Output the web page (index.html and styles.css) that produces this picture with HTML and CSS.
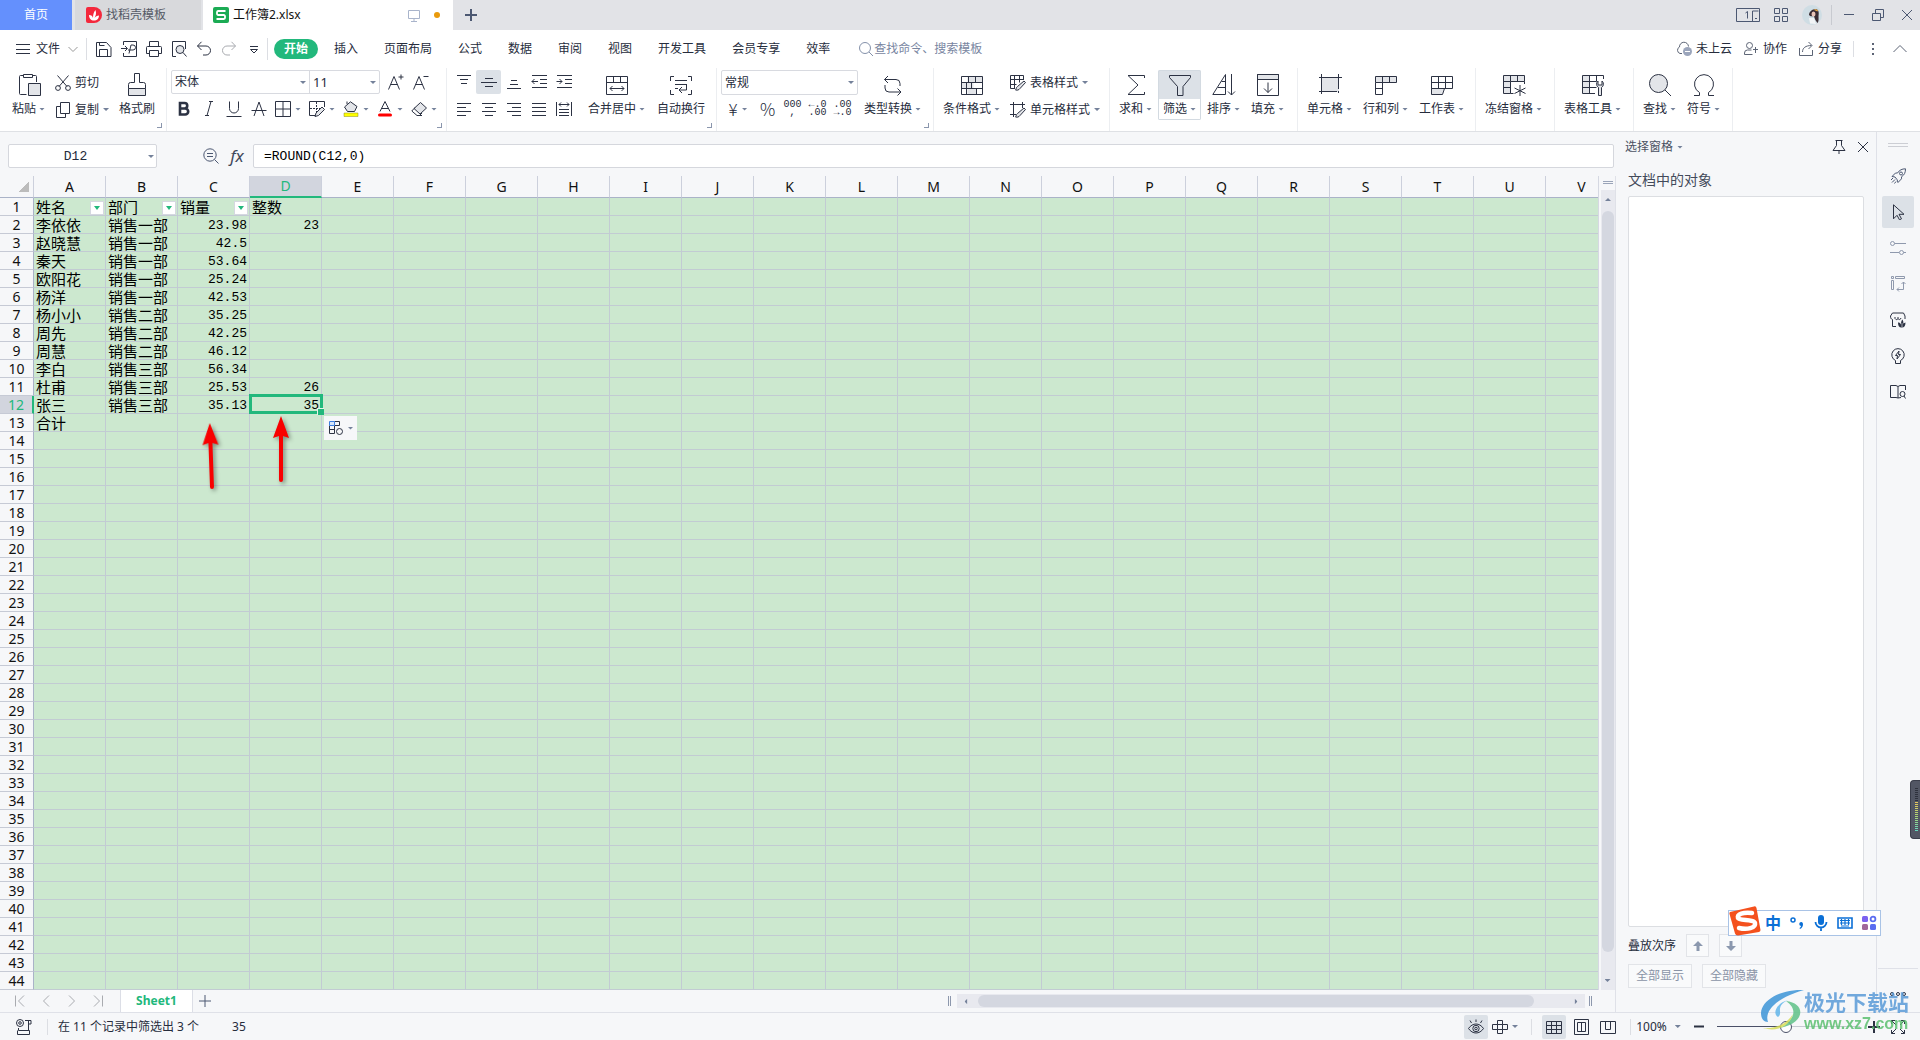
FILE: index.html
```html
<!DOCTYPE html>
<html lang="zh-CN">
<head>
<meta charset="utf-8">
<title>工作簿2.xlsx</title>
<link rel="stylesheet" href="styles.css">
</head>
<body>
<svg class="sprite" aria-hidden="true">
  <symbol id="paste" viewBox="0 0 24 24"><path d="M9.500 21.500H3.500a1 1 0 0 1-1-1V3.500a1 1 0 0 1 1-1H6.500M15.500 2.500h3a1 1 0 0 1 1 1V9"/><path d="M6.500 1.500h9v3h-9z"/><path class="f" d="M11.500 10.500h12v12h-12z"/></symbol>
  <symbol id="cut" viewBox="0 0 16 16"><path d="M2.500.5L12 11.500M13.500.5L4 11.500"/><circle cx="3" cy="13" r="2.400"/><circle cx="13" cy="13" r="2.400"/></symbol>
  <symbol id="copy" viewBox="0 0 16 16"><path d="M5.500.5h9v11h-9zM5.500 4.500h-4v11h9v-4"/></symbol>
  <symbol id="brush" viewBox="0 0 24 24"><path class="f" d="M3.500 15.500h17v7h-17z"/><path d="M3.500 15.500v-4a2 2 0 0 1 2-2h4v-9h5v9h4a2 2 0 0 1 2 2v4"/></symbol>
  <symbol id="border" viewBox="0 0 16 16"><path d="M.5.5h15v15h-15zM8 .5v15M.5 8h15"/></symbol>
  <symbol id="drawborder" viewBox="0 0 16 16"><path d="M15.500 6V.5h-15v14H7"/><path stroke-dasharray="2 1" d="M1 7.500h11M7.500 1v11"/><path class="f" d="M13 6l2.500 2.500-6 6-3.500 1 1-3.500z"/></symbol>
  <symbol id="fill" viewBox="0 0 16 16"><path class="f" d="M7.500.8L14 5.500l-2.500 5h-7L1.500 6z"/><path d="M4 3V.5"/><path fill="#ff0" stroke="#8a8a2a" stroke-width=".5" d="M1 12h14v3.500H1z"/></symbol>
  <symbol id="fontcolor" viewBox="0 0 16 16"><path d="M3 10.500L8 .5l5 10M4.500 7.500h7"/><path stroke="#f00" stroke-width="3" stroke-linecap="round" d="M2.500 14h11"/></symbol>
  <symbol id="eraser" viewBox="0 0 16 16"><path class="f" d="M9.500 1.500l6 5.500-6.500 6-6-5.500z"/><path d="M4 6.500L.8 10 6 14.500h2.500L11 12M6 14.500h5"/></symbol>
  <symbol id="aplus" viewBox="0 0 16 16"><path d="M.5 15.500l5.500-13 5.500 13M2.500 10.500h7M13 .5v5M10.500 3h5"/></symbol>
  <symbol id="aminus" viewBox="0 0 16 16"><path d="M.5 15.500l5.500-13 5.500 13M2.500 10.500h7M10.500 2.500h5"/></symbol>
  <symbol id="strike" viewBox="0 0 16 16"><path d="M3 15L8 1l5 14M.5 9.500h15"/></symbol>
  <symbol id="underl" viewBox="0 0 16 16"><path d="M3.500.5v7a4.500 4.500 0 0 0 9 0v-7M.5 15.500h15"/></symbol>
  <symbol id="ital" viewBox="0 0 16 16"><path d="M8 .5h4M4 14.500h4M10 .5l-4 14"/></symbol>
  <symbol id="boldi" viewBox="0 0 16 16"><path stroke-width="2.600" d="M4 2h4.500a2.700 2.700 0 0 1 0 5.500H4zM4 7.500h5.200a3 3 0 0 1 0 6H4z"/></symbol>
  <symbol id="vtop" viewBox="0 0 16 16"><path d="M1 1.500h14M4 5.500h8M5 9.500h6"/></symbol>
  <symbol id="vmid" viewBox="0 0 16 16"><path d="M4 4.500h8M0 8.500h16M4 12.500h8"/></symbol>
  <symbol id="vbot" viewBox="0 0 16 16"><path d="M5 6.500h6M4 10.500h8M1 14.500h14"/></symbol>
  <symbol id="outd" viewBox="0 0 16 16"><path d="M1 1.500h15M9 5.500h7M9 9.500h7M1 13.500h15M.8 7.500H7M3.500 5L1 7.500 3.500 10"/></symbol>
  <symbol id="ind" viewBox="0 0 16 16"><path d="M1 1.500h15M9 5.500h7M9 9.500h7M1 13.500h15M.5 7.500H6M3.500 5L6 7.500 3.500 10"/></symbol>
  <symbol id="al" viewBox="0 0 16 16"><path d="M1 2.500h14M1 6.500h9M1 10.500h14M1 14.500h9"/></symbol>
  <symbol id="ac" viewBox="0 0 16 16"><path d="M1 2.500h14M4 6.500h8M1 10.500h14M4 14.500h8"/></symbol>
  <symbol id="ar" viewBox="0 0 16 16"><path d="M1 2.500h14M6 6.500h9M1 10.500h14M6 14.500h9"/></symbol>
  <symbol id="aj" viewBox="0 0 16 16"><path d="M1 2.500h14M1 6.500h14M1 10.500h14M1 14.500h14"/></symbol>
  <symbol id="ad" viewBox="0 0 16 16"><path d="M.5 1v14M15.500 1v14M3 8.500h10M3 11.500h10M3 14.500h10M3 3.500h10M5 1.500l-2 2 2 2M11 1.500l2 2-2 2"/></symbol>
  <symbol id="merge" viewBox="0 0 24 24"><path d="M1.500 3.500h21v18h-21zM1.500 9.500h21M8.500 3.500v6M15.500 3.500v6M5 15.500h14M7.500 13L5 15.500 7.500 18M16.500 13l2.500 2.500-2.500 2.500"/></symbol>
  <symbol id="wrap" viewBox="0 0 24 24"><path d="M5 3.500H1.500V8M19 3.500h3.500V8M5 21.500H1.500V17M19 21.500h3.500V17M6 7.500h12M6 11.500h12M6 15.500h3M17.500 11.500v5.500h-7M13 14l-3 3 3 3"/></symbol>
  <symbol id="convert" viewBox="0 0 24 24"><path d="M7 3L3.500 6.500 7 10M3.500 6.500H15a4 4 0 0 1 4 4V13M4 12v3a4 4 0 0 0 4 4h12M16.500 15.500L20 19l-3.500 3.500"/></symbol>
  <symbol id="cond" viewBox="0 0 24 24"><path class="f" d="M7.500 3.500h15v6h-9v6h3v6h-9v-6h-6v-6h6z" stroke="none"/><path d="M1.500 3.500h21v18h-21zM1.500 9.500h21M1.500 15.500h21M8.500 3.500v6M15.500 3.500v6M6.500 9.500v12M11.500 9.500v6M16.500 15.500v6"/></symbol>
  <symbol id="tstyle" viewBox="0 0 16 16"><path d="M13.500 5V.5H.5v13H5M.5 4.500h13M.5 9.500h6M4.500.5v13M9.500.5v7"/><path class="f" d="M14 6l1.500 1.500-5.500 6c-1 1.500-3 2-4.500 1.500 1-1 .5-2.500 2-3.500z"/></symbol>
  <symbol id="cstyle" viewBox="0 0 16 16"><path d="M3.500 0v15M0 2.500h15M0 12.500h6M12.500 0v6"/><path class="f" d="M14 6l1.500 1.500-5.500 6c-1 1.500-3 2-4.500 1.500 1-1 .5-2.500 2-3.500z"/></symbol>
  <symbol id="sum" viewBox="0 0 24 24"><path d="M20.500 5V2.500H4L14 12 4 21.500h16.500V19"/></symbol>
  <symbol id="funnel" viewBox="0 0 24 24"><path d="M1.500 2.500h21v2L15 13.500v9H9.500v-9L1.500 4.500z"/></symbol>
  <symbol id="sort" viewBox="0 0 24 24"><path d="M.8 21.500L13.500 1.500v20zM6 14.500h7.500M9.500 8.500h4M19.500 1v21M16 18.500l3.500 3.500 3.500-3.500"/></symbol>
  <symbol id="fillin" viewBox="0 0 24 24"><path class="f" d="M1.500 1.500h21v5h-21z"/><path d="M1.500 1.500h21v21h-21zM12 9.500v10M8 15.500l4 4 4-4"/></symbol>
  <symbol id="cell" viewBox="0 0 24 24"><path class="f" stroke="none" d="M4 4h17v15H4z"/><path d="M3.500 1v20M20.500 1v15M1 4.500h23M1 18.500h18M20.500 18v2"/></symbol>
  <symbol id="rowcol" viewBox="0 0 24 24"><path class="f" d="M1.500 3.500h21v6h-21z"/><path d="M1.500 9.500v12h7v-18M15.500 3.500v6M1.500 15.500h7"/></symbol>
  <symbol id="sheet" viewBox="0 0 24 24"><path class="f" d="M1.500 15.500h13l-2 6h-11z"/><path d="M1.500 3.500h21v12h-21zM1.500 9.500h21M8.500 3.500v12M15.500 3.500v12"/></symbol>
  <symbol id="freeze" viewBox="0 0 24 24"><path class="f" d="M1.500 2.500h21v6h-14v12h-7z"/><path d="M22.500 8.500V11M1.500 8.500h7M1.500 14.500h7M8.500 2.500v6M15.500 2.500v6M8.500 20.500h3M18 12v11M12.500 15l11 5.500M23.500 15l-11 5.500"/></symbol>
  <symbol id="tools" viewBox="0 0 24 24"><path class="f" stroke="none" d="M2 3h6v17H2z"/><path d="M22.500 6V2.500h-21v18H14M1.500 8.500h14M1.500 14.500h14M8.500 2.500v18M15.500 2.500v6"/><path class="f" d="M17.500 22.500v-8a4 4 0 0 1-.5-6.500v4h4V8a4 4 0 0 1-.5 6.500v8z"/></symbol>
  <symbol id="find" viewBox="0 0 24 24"><circle class="f" cx="10.500" cy="10.500" r="9"/><path d="M17 17l6 6"/></symbol>
  <symbol id="omega" viewBox="0 0 24 24"><path d="M2 22.500h5.500v-3a9.500 9.500 0 1 1 9 0v3H22"/></symbol>
  <symbol id="save" viewBox="0 0 16 16"><path d="M.5 1.500h10l4.500 5v9H.5zM3.500 15v-6.500h8V15M3.500 1.500v3h5"/></symbol>
  <symbol id="pdf" viewBox="0 0 16 16"><path d="M2.500 4V.5h13v15h-13V12M0 7.500h6M4 5l2.500 2.500L4 10M8 12.500l2-8.500h2a2 2 0 0 1 0 5H7"/></symbol>
  <symbol id="print" viewBox="0 0 16 16"><path d="M3.500 5V.5h9V5M3.500 12.500h-3v-6a1 1 0 0 1 1-1h13a1 1 0 0 1 1 1v6h-3M3.500 9.500h9v6h-9z"/></symbol>
  <symbol id="preview" viewBox="0 0 16 16"><path d="M5 15.500H1.500V.5h13V8"/><circle class="f" cx="9" cy="8.500" r="4"/><path d="M12 11.500l3.500 4"/></symbol>
  <symbol id="undo" viewBox="0 0 16 16"><path d="M5.500.8L1.500 5l4 4M1.500 5H10a4.500 4.500 0 0 1 0 9H7"/></symbol>
  <symbol id="redo" viewBox="0 0 16 16"><path d="M10.500.8l4 4.200-4 4M14.500 5H6a4.500 4.500 0 0 0 0 9h3"/></symbol>
  <symbol id="more" viewBox="0 0 16 16"><path d="M4 5.500h8M4.500 8.500L8 12l3.500-3.500z"/></symbol>
  <symbol id="burger" viewBox="0 0 16 16"><path d="M1 3.500h14M1 8.500h14M1 12.500h14"/></symbol>
  <symbol id="down" viewBox="0 0 16 16"><path d="M3.500 6L8 10.500 12.500 6"/></symbol>
  <symbol id="up" viewBox="0 0 16 16"><path d="M1.500 11L8 4.500l6.500 6.500"/></symbol>
  <symbol id="search" viewBox="0 0 16 16"><circle cx="7" cy="7" r="5.500"/><path d="M11 11l4 4"/></symbol>
  <symbol id="zoomout" viewBox="0 0 16 16"><circle cx="7" cy="7" r="6.200"/><path d="M11.500 11.500l4 4M4 5.500h6M4 8.500h6"/></symbol>
  <symbol id="cloud" viewBox="0 0 16 16"><path d="M6 12.500H4A3.500 3.500 0 0 1 3.500 6a4.500 4.500 0 0 1 9-.5"/><circle cx="11.500" cy="10.500" r="4.500" fill="#9ba5bb" stroke="none"/><path stroke="#fff" d="M9 10.500h5"/></symbol>
  <symbol id="collab" viewBox="0 0 16 16"><circle cx="6.500" cy="4.500" r="3"/><path d="M9.500 13.500h-8V12a3 3 0 0 1 3-3h4M12.500 6v6M10 8.500h5"/></symbol>
  <symbol id="share" viewBox="0 0 16 16"><path d="M1.500 7v7.500h13V9M4.500 11c0-4 3-6.500 9-6.500M10.500 1l3.500 3.500-3.500 3.500"/></symbol>
  <symbol id="dots" viewBox="0 0 16 16"><path stroke-width="2" d="M7 3h2M7 8h2M7 13h2"/></symbol>
  <symbol id="plus" viewBox="0 0 16 16"><path d="M8 2v12M2 8h12"/></symbol>
  <symbol id="monitor" viewBox="0 0 16 16"><path d="M2.500 3.500h11v8h-11zM8 11.500v3M5 14.500h6"/></symbol>
  <symbol id="min" viewBox="0 0 16 16"><path d="M3 7.500h10"/></symbol>
  <symbol id="restore" viewBox="0 0 16 16"><path d="M2.500 6.500h8v7h-8zM5.500 6.500v-4h8v8h-3"/></symbol>
  <symbol id="close" viewBox="0 0 16 16"><path d="M3 3l10 10M13 3L3 13"/></symbol>
  <symbol id="apps" viewBox="0 0 16 16"><path d="M1.500 1.500h5v5h-5zM9.500 1.500h5v5h-5zM1.500 9.500h5v5h-5zM9.500 9.500h5v5h-5z"/></symbol>
  <symbol id="pin" viewBox="0 0 16 16"><path d="M4.500 1.500h7M5.500 1.500v5L2 11.500h12L10.500 6.500v-5M8 11.500V15"/></symbol>
  <symbol id="rocket" viewBox="0 0 16 16"><path d="M5 9l-3-.5L5.500 5h2C9.500 2 12 .8 15.500.8c0 3.700-1 6-4 8v2L8 14.500 7 11.500zM1 12l2-2M2 14.500l3-3M4.500 15.500l1.500-2"/><circle cx="11" cy="5.500" r="1.500"/></symbol>
  <symbol id="cursor" viewBox="0 0 16 16"><path d="M3.500.8v14l3.500-3.500 2.500 4.500 2-1-2.500-4.500h5z"/></symbol>
  <symbol id="sliders" viewBox="0 0 16 16"><circle cx="2.500" cy="3.500" r="2"/><path d="M4.500 3.500H16M0 12.500h9M13.500 12.500H16"/><circle cx="11.500" cy="12.500" r="2"/></symbol>
  <symbol id="layout" viewBox="0 0 16 16"><path d="M1.500.5h2v2h-2zM5.500.5h9v2h-9zM1.500 4.500h2v9h-2zM13.500 6v7.500H7M11.500 8l2-2 2 2M9 11.500l-2 2 2 2"/></symbol>
  <symbol id="shop" viewBox="0 0 16 16"><path d="M6 14.500H2.500V7.500M2.500 7.500C1 7 .5 6 .5 4l2-3h11l1.500 3v3M5 5v1.500c1 1.500 2.500 1.500 3 0V5M8 6.500c.5 1.500 2.500 1.500 3-.5"/><path fill="#2c3243" stroke="none" d="M8 10.500c1.500 0 2.300.5 3 2 0-2 .3-3.500 1.200-5 1 1 1.300 2 1.100 4l2.200-1c0 3-1 5-3.800 5S8 13.500 8 10.500z"/><path stroke="#f6f7f9" stroke-width=".6" d="M12 15v-4"/></symbol>
  <symbol id="bulb" viewBox="0 0 16 16"><path d="M5.500 12.500a6.200 6.200 0 1 1 5 0v3h-5zM9 3L5.500 7.500h2L7 11l3.500-4.500h-2z"/></symbol>
  <symbol id="book" viewBox="0 0 16 16"><path d="M8 14L6 13.500H.5v-12H6L8 2.500l2-1h5.500V6M8 2.500V14l3-.5"/><circle cx="12.500" cy="10" r="2.500"/><path d="M14 12l1.500 2.500"/></symbol>
  <symbol id="first" viewBox="0 0 16 16"><path d="M3.500 2.500v11M12 2.500L6.500 8l5.500 5.500"/></symbol>
  <symbol id="prev" viewBox="0 0 16 16"><path d="M11 2.500L5.500 8l5.500 5.500"/></symbol>
  <symbol id="next" viewBox="0 0 16 16"><path d="M5 2.500L10.500 8 5 13.500"/></symbol>
  <symbol id="last" viewBox="0 0 16 16"><path d="M12.500 2.500v11M4 2.500L9.500 8 4 13.500"/></symbol>
  <symbol id="record" viewBox="0 0 16 16"><circle cx="4" cy="4" r="3.500"/><circle cx="4" cy="4" r="1.300"/><path d="M9 1.500h6V5h-2.500M12.500 1.500v10M2.500 9v2.500h11v4h-12v-4"/></symbol>
  <symbol id="eye" viewBox="0 0 16 16"><path d="M.5 9.500c4-6 11-6 15 0-4 6-11 6-15 0zM8 3V.5M3.500 4L2 1.500M12.500 4L14 1.500"/><circle cx="8" cy="9.500" r="3.200"/><circle cx="8" cy="9.500" r="1.300"/></symbol>
  <symbol id="cross" viewBox="0 0 16 16"><path d="M5.500 1.500h5v4h5v5h-5v4h-5v-4h-5v-5h5zM5.500 5.500h5v5h-5z"/></symbol>
  <symbol id="grid" viewBox="0 0 16 16"><path d="M.5 2.500h15v12H.5zM.5 6.500h15M.5 10.500h15M5.500 2.500v12M10.500 2.500v12"/></symbol>
  <symbol id="page" viewBox="0 0 16 16"><path d="M1.500.5h14v15h-14zM4.500 3.500h8v9h-8zM8.500 3.500v9"/></symbol>
  <symbol id="brk" viewBox="0 0 16 16"><path d="M.5 2.500h15v12H.5zM5.500 2.500v8M10.500 2.500v8M5.500 10.500h5"/></symbol>
  <symbol id="full" viewBox="0 0 16 16"><path d="M1.500 5V1.500H5M11 1.500h3.500V5M1.500 11v3.500H5M14.500 11v3.500H11M1.500 1.500l4.500 4.500M14.500 1.500L10 6M1.500 14.500L6 10M14.500 14.500L10 10"/></symbol>
  <symbol id="arru" viewBox="0 0 16 16"><path fill="#8b98ae" stroke="none" d="M8 3l5 5H9.500v5h-3V8H3z"/></symbol>
  <symbol id="arrd" viewBox="0 0 16 16"><path fill="#8b98ae" stroke="none" d="M8 13l5-5H9.500V3h-3v5H3z"/></symbol>
  <symbol id="redarrow" viewBox="0 0 24 76"><path fill="#f80000" stroke="none" d="M12 2l8 22-6-2v44a2 2 0 0 1-4 0V22l-6 2z"/></symbol>
</svg>

<div class="app">
  <header class="titlebar">
    <button class="tab home">首页</button>
    <button class="tab doke"><svg class="logo" viewBox="0 0 16 16"><path fill="#f4283c" d="M0 2a2 2 0 0 1 2-2h6a8 8 0 0 1 0 16H2a2 2 0 0 1-2-2z"/><path fill="#fff" d="M3 8c2.500 0 3.500 1 4 3 0-3 .5-6 2.500-8 1 3 .5 5.500-1 8 1-1.500 2.500-2.500 4.500-2.500 0 3-2 5-5 5s-5-2-5-5.500z"/></svg>找稻壳模板</button>
    <button class="tab active"><svg class="logo" viewBox="0 0 16 16"><rect width="16" height="16" rx="2" fill="#1bab54"/><path fill="none" stroke="#fff" stroke-width="1.800" d="M12.500 4H5a1.200 1.200 0 0 0-1 1.200v1.600A1.200 1.200 0 0 0 5.200 8h5.600A1.200 1.200 0 0 1 12 9.200v1.600a1.200 1.200 0 0 1-1.200 1.200H3.500"/></svg><span class="grow">工作簿2.xlsx</span><svg class="i pale"><use href="#monitor"/></svg><i class="dot"></i></button>
    <button class="ib addtab" aria-label="新建"><svg class="i slate bold"><use href="#plus"/></svg></button>
    <div class="wintools">
      <button class="ib" aria-label="窗口"><svg class="winone slate" viewBox="0 0 24 14"><path d="M.5.5h23v13H.5zM16.500 13V3h6M19 10.500h2"/><path d="M9.500 5l2-1.500v7"/></svg></button>
      <button class="ib" aria-label="应用"><svg class="i slate"><use href="#apps"/></svg></button>
      <svg class="avatar" viewBox="0 0 20 20"><circle cx="10" cy="10" r="10" fill="#cfdde4"/><path fill="#3a2c33" d="M7 10c0-3 3-6 7-6 3 1 3 4 2.500 7 0 3 .5 5-1 7-1.500-2-3-4-3.500-7-1.500 0-3.500 1-5-1z"/><ellipse cx="11.500" cy="9" rx="2" ry="2.500" fill="#e9c4b8"/><path fill="#e3a84a" d="M13 4l3 1-.5 1.500L12 5z"/><path fill="#f2f4f6" d="M7 13l5 0 2 6-6-.5z"/></svg>
      <i class="sep"></i>
      <button class="ib" aria-label="最小化"><svg class="i slate"><use href="#min"/></svg></button>
      <button class="ib" aria-label="还原"><svg class="i slate"><use href="#restore"/></svg></button>
      <button class="ib" aria-label="关闭"><svg class="i slate"><use href="#close"/></svg></button>
    </div>
  </header>

  <nav class="menubar">
    <button class="ib file"><svg class="i"><use href="#burger"/></svg>文件<svg class="i pale2"><use href="#down"/></svg></button>
    <div class="quick">
      <button class="ib" aria-label="保存"><svg class="i"><use href="#save"/></svg></button>
      <button class="ib" aria-label="输出PDF"><svg class="i"><use href="#pdf"/></svg></button>
      <button class="ib" aria-label="打印"><svg class="i"><use href="#print"/></svg></button>
      <button class="ib" aria-label="预览"><svg class="i"><use href="#preview"/></svg></button>
      <button class="ib" aria-label="撤销"><svg class="i"><use href="#undo"/></svg></button>
      <button class="ib" aria-label="恢复"><svg class="i off"><use href="#redo"/></svg></button>
      <button class="ib" aria-label="更多"><svg class="i"><use href="#more"/></svg></button>
    </div>
    <div class="menus">
      <button class="menu on">开始</button><button class="menu">插入</button><button class="menu">页面布局</button><button class="menu">公式</button><button class="menu">数据</button><button class="menu">审阅</button><button class="menu">视图</button><button class="menu">开发工具</button><button class="menu">会员专享</button><button class="menu">效率</button>
    </div>
    <label class="search"><svg class="i"><use href="#search"/></svg><input type="text" placeholder="查找命令、搜索模板" aria-label="查找命令"></label>
    <div class="cloudtools">
      <button class="ib"><svg class="i mid"><use href="#cloud"/></svg>未上云</button>
      <button class="ib"><svg class="i mid"><use href="#collab"/></svg>协作</button>
      <button class="ib"><svg class="i mid"><use href="#share"/></svg>分享</button>
      <i class="sep"></i>
      <button class="ib" aria-label="选项"><svg class="i mid"><use href="#dots"/></svg></button>
      <button class="ib" aria-label="收起"><svg class="i mid"><use href="#up"/></svg></button>
    </div>
  </nav>

  <section class="ribbon">
    <div class="group clip">
      <button class="big"><svg><use href="#paste"/></svg><span>粘贴<i class="caret"></i></span></button>
      <div class="stack">
        <button class="small"><svg class="i"><use href="#cut"/></svg>剪切</button>
        <button class="small"><svg class="i"><use href="#copy"/></svg>复制<i class="caret"></i></button>
      </div>
      <button class="big"><svg><use href="#brush"/></svg><span>格式刷</span></button>
      <i class="corner"></i>
    </div>
    <div class="group">
      <div class="stack">
        <div class="line">
          <div class="fontpick"><select aria-label="字体"><option>宋体</option></select><select class="size" aria-label="字号"><option>11</option></select></div>
          <button class="t25" aria-label="增大字号"><svg class="i"><use href="#aplus"/></svg></button><button class="t25" aria-label="减小字号"><svg class="i"><use href="#aminus"/></svg></button>
        </div>
        <div class="line">
          <button class="t25" aria-label="加粗"><svg class="i"><use href="#boldi"/></svg></button><button class="t25" aria-label="倾斜"><svg class="i"><use href="#ital"/></svg></button><button class="t25" aria-label="下划线"><svg class="i"><use href="#underl"/></svg></button><button class="t25" aria-label="删除线"><svg class="i"><use href="#strike"/></svg></button>
          <button class="t34" aria-label="边框"><svg class="i"><use href="#border"/></svg><i class="caret far"></i></button><button class="t34" aria-label="绘图边框"><svg class="i"><use href="#drawborder"/></svg><i class="caret far"></i></button><button class="t34" aria-label="填充颜色"><svg class="i"><use href="#fill"/></svg><i class="caret far"></i></button><button class="t34" aria-label="字体颜色"><svg class="i"><use href="#fontcolor"/></svg><i class="caret far"></i></button><button class="t34" aria-label="清除"><svg class="i"><use href="#eraser"/></svg><i class="caret far"></i></button>
        </div>
      </div>
      <i class="corner"></i>
    </div>
    <div class="group">
      <div class="stack">
        <div class="line"><button class="t25" aria-label="顶端对齐"><svg class="i"><use href="#vtop"/></svg></button><button class="t25 sel" aria-label="垂直居中"><svg class="i"><use href="#vmid"/></svg></button><button class="t25" aria-label="底端对齐"><svg class="i"><use href="#vbot"/></svg></button><button class="t25" aria-label="减少缩进"><svg class="i"><use href="#outd"/></svg></button><button class="t25" aria-label="增加缩进"><svg class="i"><use href="#ind"/></svg></button></div>
        <div class="line"><button class="t25" aria-label="左对齐"><svg class="i"><use href="#al"/></svg></button><button class="t25" aria-label="居中"><svg class="i"><use href="#ac"/></svg></button><button class="t25" aria-label="右对齐"><svg class="i"><use href="#ar"/></svg></button><button class="t25" aria-label="两端对齐"><svg class="i"><use href="#aj"/></svg></button><button class="t25" aria-label="分散对齐"><svg class="i"><use href="#ad"/></svg></button></div>
      </div>
      <div class="pair">
        <button class="big"><svg><use href="#merge"/></svg><span>合并居中<i class="caret"></i></span></button>
        <button class="big"><svg><use href="#wrap"/></svg><span>自动换行</span></button>
      </div>
      <i class="corner"></i>
    </div>
    <div class="group">
      <div class="stack">
        <select class="numfmt" aria-label="数字格式"><option>常规</option></select>
        <div class="line"><button class="t34 num">¥<i class="caret far"></i></button><button class="t25 num">%</button><button class="t25 tiny"><span>000</span><span>,</span></button><button class="t25 tiny"><span>←.0</span><span>.00</span></button><button class="t25 tiny"><span>.00</span><span>→.0</span></button></div>
      </div>
      <button class="big"><svg><use href="#convert"/></svg><span>类型转换<i class="caret"></i></span></button>
      <i class="corner"></i>
    </div>
    <div class="group">
      <button class="big"><svg><use href="#cond"/></svg><span>条件格式<i class="caret"></i></span></button>
      <div class="stack">
        <button class="small"><svg class="i"><use href="#tstyle"/></svg>表格样式<i class="caret"></i></button>
        <button class="small"><svg class="i"><use href="#cstyle"/></svg>单元格样式<i class="caret"></i></button>
      </div>
    </div>
    <div class="group">
      <button class="big"><svg><use href="#sum"/></svg><span>求和<i class="caret"></i></span></button>
      <button class="big sel"><svg><use href="#funnel"/></svg><span>筛选<i class="caret"></i></span></button>
      <button class="big"><svg><use href="#sort"/></svg><span>排序<i class="caret"></i></span></button>
      <button class="big"><svg><use href="#fillin"/></svg><span>填充<i class="caret"></i></span></button>
    </div>
    <div class="group">
      <button class="big"><svg><use href="#cell"/></svg><span>单元格<i class="caret"></i></span></button>
      <button class="big"><svg><use href="#rowcol"/></svg><span>行和列<i class="caret"></i></span></button>
      <button class="big"><svg><use href="#sheet"/></svg><span>工作表<i class="caret"></i></span></button>
    </div>
    <div class="group"><button class="big"><svg><use href="#freeze"/></svg><span>冻结窗格<i class="caret"></i></span></button></div>
    <div class="group"><button class="big"><svg><use href="#tools"/></svg><span>表格工具<i class="caret"></i></span></button></div>
    <div class="group">
      <button class="big"><svg><use href="#find"/></svg><span>查找<i class="caret"></i></span></button>
      <button class="big"><svg><use href="#omega"/></svg><span>符号<i class="caret"></i></span></button>
    </div>
  </section>

  <div class="work">
    <main class="book">
      <div class="formula">
        <input class="name" value="D12" aria-label="名称框">
        <button class="ib" aria-label="缩小"><svg class="i slate"><use href="#zoomout"/></svg></button>
        <button class="ib fx">fx</button>
        <input class="expr" value="=ROUND(C12,0)" aria-label="编辑栏">
      </div>
      <div class="sheetrow">
        <div class="sheet">
          <table id="cells"></table>
          <svg class="redarrow one"><use href="#redarrow"/></svg>
          <svg class="redarrow two"><use href="#redarrow"/></svg>
          <button class="pasteopt" aria-label="粘贴选项"><svg class="i" viewBox="0 0 16 16"><path d="M1.500 5.500v8h5M1.500 9.500h5M6.500 5.500v8M6.500 1.500h5v4h-5"/><path fill="#d6e6fb" stroke="#3d7fe0" d="M1.500 1.500h5v4h-5z"/><circle cx="11.500" cy="11.500" r="3"/></svg><i class="caret far"></i></button>
        </div>
        <div class="vscroll"><i class="grip"></i><div class="track"><i class="caret upw"></i><i class="thumb"></i><i class="caret"></i></div></div>
      </div>
      <footer class="tabs">
        <div class="navs"><button class="ib" aria-label="第一个"><svg class="i off"><use href="#first"/></svg></button><button class="ib" aria-label="上一个"><svg class="i off"><use href="#prev"/></svg></button><button class="ib" aria-label="下一个"><svg class="i off"><use href="#next"/></svg></button><button class="ib" aria-label="最后一个"><svg class="i off"><use href="#last"/></svg></button></div>
        <button class="sheettab">Sheet1</button>
        <button class="ib" aria-label="新建工作表"><svg class="i slate"><use href="#plus"/></svg></button>
        <i class="vgrip left"></i>
        <div class="hscroll"><i class="caret lft"></i><i class="thumb"></i><i class="caret rgt"></i></div>
        <i class="vgrip"></i>
      </footer>
    </main>
    <aside class="panel">
      <div class="phead"><button class="ib">选择窗格<i class="caret far"></i></button><button class="ib pinb" aria-label="固定"><svg class="i"><use href="#pin"/></svg></button><button class="ib" aria-label="关闭窗格"><svg class="i"><use href="#close"/></svg></button></div>
      <h2>文档中的对象</h2>
      <div class="objects"></div>
      <div class="order"><span>叠放次序</span><button class="sq" aria-label="上移"><svg class="i"><use href="#arru"/></svg></button><button class="sq" aria-label="下移"><svg class="i"><use href="#arrd"/></svg></button></div>
      <div class="shows"><button>全部显示</button><button>全部隐藏</button></div>
    </aside>
    <aside class="rail">
      <i class="grip"></i>
      <button aria-label="推荐"><svg class="i slate"><use href="#rocket"/></svg></button>
      <button class="sel" aria-label="选择"><svg class="i"><use href="#cursor"/></svg></button>
      <button aria-label="属性"><svg class="i grey"><use href="#sliders"/></svg></button>
      <button aria-label="布局"><svg class="i grey"><use href="#layout"/></svg></button>
      <button aria-label="素材"><svg class="i"><use href="#shop"/></svg></button>
      <button aria-label="灵感"><svg class="i"><use href="#bulb"/></svg></button>
      <button aria-label="帮助"><svg class="i"><use href="#book"/></svg></button>
      <div class="railend"><svg class="i" viewBox="0 0 16 16"><circle cx="2" cy="8" r="1.500"/><circle cx="8" cy="8" r="1.500"/><circle cx="14" cy="8" r="1.500"/></svg></div>
    </aside>
  </div>

  <footer class="status">
    <button class="ib rec" aria-label="录制"><svg class="i"><use href="#record"/></svg></button>
    <i class="sep"></i>
    <span class="msg">在 11 个记录中筛选出 3 个</span><span class="grow">35</span>
    <button class="t25 sel" aria-label="护眼"><svg class="i"><use href="#eye"/></svg></button>
    <button class="t34 cr" aria-label="阅读模式"><svg class="i"><use href="#cross"/></svg><i class="caret far"></i></button>
    <i class="sep"></i>
    <div class="views"><button class="t25 sel" aria-label="普通视图"><svg class="i"><use href="#grid"/></svg></button><button class="t25" aria-label="页面布局视图"><svg class="i"><use href="#page"/></svg></button><button class="t25" aria-label="分页预览"><svg class="i"><use href="#brk"/></svg></button></div>
    <i class="sep"></i>
    <button class="ib pct">100%<i class="caret far"></i></button>
    <button class="ib" aria-label="缩小显示"><svg class="i bold"><use href="#min"/></svg></button>
    <input class="zoom" type="range" min="0" max="100" value="48" aria-label="缩放">
    <button class="ib" aria-label="放大显示"><svg class="i bold"><use href="#plus"/></svg></button>
    <button class="ib fs" aria-label="全屏"><svg class="i"><use href="#full"/></svg></button>
  </footer>
</div>

<div class="meter"><i class="idle"></i><i class="live"></i></div>

<div class="ime">
  <svg class="imelogo" viewBox="0 0 32 30"><path fill="#f4511e" d="M1 6L25 .5a2 2 0 0 1 2.500 1.500L31.500 24a2 2 0 0 1-1.500 2L9 29.500A3 3 0 0 1 6 27.500L.5 8A2 2 0 0 1 1 6z"/><path fill="none" stroke="#fff" stroke-width="4.500" stroke-linecap="round" d="M23 7C14 6 8 8 9 12c1 3 16 1 17 5 1 5-8 7-16 5"/></svg>
  <span class="zh">中</span>
  <svg viewBox="0 0 16 16"><circle cx="4" cy="5" r="2" fill="none" stroke="#0a6fd6" stroke-width="1.500"/><path fill="#0a6fd6" d="M12.500 7a2 2 0 0 1 1.500 2c0 2.500-1 4-3 5l-.5-1c1-.5 1.500-1.500 1.500-2a2 2 0 0 1 .5-4z"/></svg>
  <svg viewBox="0 0 16 16"><rect x="5" y="0" width="6" height="10" rx="3" fill="#0a6fd6"/><path fill="none" stroke="#0a6fd6" stroke-width="1.800" d="M2.500 7a5.500 5.500 0 0 0 11 0M8 12.500V16"/></svg>
  <svg viewBox="0 0 16 16"><path fill="none" stroke="#0a6fd6" stroke-width="1.600" d="M1 3h14v10H1z"/><path fill="none" stroke="#0a6fd6" stroke-width="1.200" d="M3 5.500h10M3 8h10M4.500 4v6M8 4v6M11.500 4v6M4 11h8"/></svg>
  <svg class="glow" viewBox="0 0 16 16"><rect x="1" y="1" width="6" height="6" rx="1.500" fill="#7b61f0"/><circle cx="12" cy="4" r="2.400" fill="none" stroke="#5a6cf0" stroke-width="1.800"/><rect x="1" y="9" width="6" height="6" rx="1.500" fill="#a0679a"/><rect x="9" y="9" width="6" height="6" rx="1.500" fill="#5a6cf0"/></svg>
</div>

<div class="mark">
  <svg viewBox="0 0 44 42"><path fill="#3d94d8" d="M44 1C22 0 2 10 1 24c0 6 3 9 7 9C4 22 16 9 44 1z"/><path fill="#62b6ea" d="M18 28c-6-4-1-14 10-17-14 7-4 13-10 17z"/><path fill="#5fc188" d="M26 12c20 2 20 22-6 27 12-7 20-17 6-27z"/><path fill="#d6dc58" d="M3 39c12 1 24-4 30-14-4 14-18 18-30 14z"/></svg>
  <div><b>极光下载站</b><em>www.xz7.com</em></div>
</div>
<script src="sheet.js"></script>
</body>
</html>
```
FILE: styles.css
```css
* { box-sizing: border-box; }
body { margin: 0; font: 12px/18px "Noto Sans", "Noto Sans CJK SC", sans-serif; color: #262c3c; background: #f6f7f9; }
button, input, select { font: inherit; color: inherit; border: 0; background: none; padding: 0; margin: 0; }
button { display: flex; align-items: center; justify-content: center; white-space: nowrap; }
svg { fill: none; stroke: #2c3243; stroke-width: 1; flex: none; display: block; }
.sprite { position: absolute; width: 0; height: 0; }
.i { width: 16px; height: 16px; }
.f { fill: #e3e5e9; }
.slate { stroke: #4c5872; }
.pale { stroke: #a9b4cb; }
.pale2 { stroke: #999; }
.mid { stroke: #5c6475; }
.grey { stroke: #8f99ad; }
.off { stroke: #a9abb0; }
.bold { stroke-width: 2; }
.grow { flex: 1; text-align: left; }
.sep { width: 1px; height: 16px; background: #dcdee3; flex: none; }
.caret { width: 6px; height: 3px; margin-left: 3px; background: #74819a; clip-path: polygon(0 0, 100% 0, 50% 100%); flex: none; }
.caret.far { margin-left: 4px; }

.app { display: flex; flex-direction: column; height: 100vh; }

.titlebar { display: flex; height: 30px; background: #e2e3e7; flex: none; }
.tab { height: 30px; gap: 4px; }
.home { width: 72px; background: #6490fd; color: #fff; }
.doke { width: 126px; margin-left: 3px; padding: 0 11px; justify-content: flex-start; background: #d8d9dc; color: #555a66; }
.active { width: 250px; margin-left: 2px; padding: 0 8px 0 10px; background: #fff; color: #111; }
.logo { width: 16px; height: 16px; stroke: none; }
.dot { width: 6px; height: 6px; margin: 0 5px 0 8px; border-radius: 50%; background: #e99a0c; }
.addtab { width: 36px; }
.wintools { display: flex; align-items: center; gap: 13px; margin-left: auto; padding-right: 5px; }
.wintools .ib { min-width: 16px; }
.wintools .sep { height: 20px; margin: 0 -4px; background: #c8cad0; }
.winone { width: 24px; height: 14px; }
.avatar { width: 20px; height: 20px; stroke: none; }

.menubar { display: flex; align-items: center; height: 38px; background: #fff; padding: 0 12px 0 15px; flex: none; }
.file { gap: 5px; width: 72px; justify-content: flex-start; border-right: 1px solid #dcdee3; height: 22px; }
.quick { display: flex; gap: 9px; padding: 0 5px 0 9px; border-right: 1px solid #dcdee3; height: 22px; width: 181px; }
.menus { display: flex; margin-left: 3px; }
.menu { margin: 0 3px; padding: 0 10px; height: 20px; border-radius: 10px; }
.on { background: #22b87c; color: #fff; font-weight: bold; }
.search { display: flex; align-items: center; width: 180px; margin-left: 15px; }
.search svg { stroke: #8491aa; }
.search input { width: 150px; outline: 0; }
.search input::placeholder { color: #78859f; opacity: 1; }
.cloudtools { display: flex; align-items: center; gap: 11px; margin-left: auto; }
.cloudtools .ib { gap: 4px; }

.ribbon { display: grid; grid-template-columns: 167px 280px 270px 217px 176px 188px 178px 79px 79px 99px; height: 63px; background: #fff; flex: none; }
.group { position: relative; display: flex; gap: 1px; padding: 2px 5px 0 4px; border-right: 1px solid #eceef1; }
.clip { padding-left: 7px; }
.corner { position: absolute; right: 4px; bottom: 3px; width: 5px; height: 5px; border: solid #8a96ad; border-width: 0 1px 1px 0; }
.big { flex-direction: column; justify-content: flex-start; height: 50px; padding: 3px 5px 0; border-radius: 2px; }
.big svg { width: 24px; height: 24px; }
.big span { display: flex; align-items: center; line-height: 18px; margin-top: 3px; }
.sel { background: #dce1e7; border-radius: 2px; }
.big.sel { box-shadow: inset 0 0 0 1px #d3dae1; padding: 3px 1px 0; }
.big.sel span { background: #fff; padding: 0 4px; height: 20px; margin-top: 2px; }
.stack { display: flex; flex-direction: column; gap: 2px; }
.small { height: 25px; gap: 4px; padding: 0 4px; justify-content: flex-start; }
.small .caret { margin-left: 0; }
.line { display: flex; height: 25px; }
.t25 { width: 25px; height: 24px; flex: none; }
.t34 { width: 34px; height: 24px; flex: none; }
.fontpick { display: flex; width: 209px; height: 24px; border: 1px solid #d8dae0; border-radius: 2px; margin-right: 3px; }
select { appearance: none; flex: 1; padding: 0 3px; background: url("data:image/svg+xml,%3Csvg xmlns='http://www.w3.org/2000/svg' width='6' height='3'%3E%3Cpath d='M0 0h6L3 3z' fill='%2374819a'/%3E%3C/svg%3E") no-repeat right 3px center; }
.size { flex: none; width: 70px; border-left: 1px solid #d8dae0; font-size: 13px; }
.numfmt { flex: none; width: 137px; height: 25px; border: 1px solid #d8dae0; border-radius: 2px; }
.pair { display: flex; gap: 2px; margin-left: 6px; }
.num { font: 17px/24px "Noto Sans CJK SC", sans-serif; font-weight: 300; }
.tiny { flex-direction: column; font: 10px/8px "Liberation Mono", monospace; }

.work { display: flex; flex: 1; min-height: 0; border-top: 1px solid #dfe1e5; }
.book { display: flex; flex-direction: column; flex: 1; min-width: 0; }
.formula { display: flex; align-items: center; height: 44px; padding: 4px 2px 0 8px; flex: none; font-family: "Liberation Mono", "Noto Sans CJK SC", monospace; font-size: 13px; }
.name, .expr { height: 24px; border: 1px solid #d5d7dd; border-radius: 2px; background: #fff; }
.name { width: 149px; margin-right: 46px; padding-right: 14px; text-align: center; background: #fff url("data:image/svg+xml,%3Csvg xmlns='http://www.w3.org/2000/svg' width='6' height='3'%3E%3Cpath d='M0 0h6L3 3z' fill='%2374819a'/%3E%3C/svg%3E") no-repeat right 2px center; }
.fx { width: 34px; padding-left: 2px; font: italic 17px/20px "Noto Sans", sans-serif; color: #3f4759; }
.expr { flex: 1; min-width: 0; padding: 0 10px; color: #000; }

.sheetrow { display: flex; flex: 1; min-height: 0; }
.sheet { position: relative; flex: 1; min-width: 0; overflow: hidden; border-right: 1px solid #d5d8e2; }
#cells { table-layout: fixed; width: 1618px; border-spacing: 0; color: #000; }
#cells th { font: 14px/16px "Noto Sans", sans-serif; padding: 0; background: #f6f7f9; color: #111; }
#cells thead th { height: 22px; border-right: 1px solid #ccd0dc; border-bottom: 1px solid #aab3c8; }
#cells tbody th { height: 18px; border-right: 1px solid #aab3c8; border-bottom: 1px solid #c6cad5; }
#cells td { height: 18px; padding: 0 2px; border-right: 1px solid #c2cbd3; border-bottom: 1px solid #c2cbd3; background: #cce8cf; font: 15px/17px "Noto Sans CJK SC", sans-serif; white-space: nowrap; }
#cells td.n { padding-top: 2px; font: 13px/15px "Liberation Mono", monospace; text-align: right; }
#cells thead th.cur { background: #d2d5de; color: #22b87c; border-bottom: 2px solid #22b87c; }
#cells tbody th.cur { background: #d2d5de; color: #22b87c; border-right: 2px solid #22b87c; }
#cells thead th.all { background: linear-gradient(135deg, transparent 50%, #bcbcbc 50%) no-repeat 18px 5px / 11px 11px #f6f7f9; }
.headcell { display: flex; height: 17px; justify-content: space-between; align-items: flex-end; line-height: 17px; margin-right: -1px; }
.filter { width: 14px; height: 14px; background: #fff; border: 1px solid #d5d8e0; }
.filter i { width: 6px; height: 4px; background: #22b87c; clip-path: polygon(0 0, 100% 0, 50% 100%); }
#cells td.pick { position: relative; }
.frame { position: absolute; inset: -2px -2px -1px -1px; border: 3px solid #22b87c; }
.frame::after { content: ""; position: absolute; right: -4px; bottom: -4px; width: 6px; height: 6px; background: #22b87c; border: solid #e6f4e8; border-width: 1px 0 0 1px; }
.redarrow { position: absolute; width: 24px; height: 76px; filter: drop-shadow(2px 2px 2px #0006); }
.one { left: 199px; top: 245px; transform: rotate(-2deg); }
.two { left: 269px; top: 238px; }
.pasteopt { position: absolute; left: 324px; top: 240px; width: 33px; height: 24px; background: #f6f7f9; }
.vscroll { width: 17px; padding: 5px 1px 0 2px; display: flex; flex-direction: column; align-items: center; border-right: 1px solid #dfe1e8; }
.grip { width: 10px; height: 3px; border: solid #9aa4b8; border-width: 1px 0; flex: none; }
.track { flex: 1; width: 14px; margin-top: 6px; padding: 8px 1px; display: flex; flex-direction: column; align-items: center; background: #e8e9ef; }
.track .caret { margin: 0; }
.track .upw { transform: rotate(180deg); }
.track .thumb { flex: 1; width: 12px; margin: 10px 0 27px; border-radius: 6px; background: #d4d7e0; }

.tabs { display: flex; align-items: center; height: 22px; padding-right: 23px; border-right: 1px solid #dfe1e8; flex: none; }
.navs { display: flex; gap: 10px; padding: 0 15px 0 12px; width: 120px; }
.sheettab { width: 73px; height: 22px; margin-right: 4px; background: #fff; border: solid #dcdee6; border-width: 0 1px; color: #22b87c; font-weight: bold; }
.vgrip { width: 3px; height: 10px; border: solid #8d98ad; border-width: 0 1px; flex: none; }
.vgrip.left { margin: 0 6px 0 auto; }
.hscroll { display: flex; align-items: center; flex: 0 1 628px; height: 14px; margin-right: 4px; padding: 1px 6px; background: #e8e9ef; }
.hscroll .thumb { flex: 1; height: 12px; margin: 0 39px 0 9px; border-radius: 6px; background: #d4d7e0; }
.hscroll .caret { margin: 0; }
.lft { transform: rotate(90deg); }
.rgt { transform: rotate(-90deg); }

.panel { display: flex; flex-direction: column; width: 261px; padding: 6px 12px 24px; flex: none; border-right: 1px solid #dfe1e8; }
.phead { display: flex; align-items: center; gap: 8px; height: 18px; margin: 0 -7px 0 -3px; color: #4a5162; }
.pinb { margin-left: auto; }
h2 { margin: 15px 0 7px; font-size: 14px; line-height: 18px; font-weight: normal; color: #434a5a; }
.objects { flex: 1; background: #fff; border: 1px solid #dcdee2; border-radius: 2px; }
.order { display: flex; align-items: center; gap: 10px; margin: 7px 0; }
.sq { width: 23px; height: 23px; border: 1px solid #e2e4e8; background: #f9fafb; }
.shows { display: flex; gap: 10px; }
.shows button { width: 64px; height: 24px; border: 1px solid #e2e4e8; background: #f9fafb; color: #8a93a6; }
.rail { display: flex; flex-direction: column; align-items: center; width: 43px; padding: 11px 2px 10px 1px; gap: 4px; flex: none; }
.rail .grip { width: 20px; height: 4px; border-color: #ccced4; margin-bottom: 9px; }
.rail button { width: 32px; height: 32px; }
.railend { display: flex; justify-content: center; align-self: stretch; margin-top: auto; padding-top: 17px; border-top: 1px solid #dfe1e8; }

.status { display: flex; align-items: center; height: 28px; padding: 0 14px 0 0; border-top: 1px solid #dfe1e8; flex: none; }
.rec { width: 47px; }
.msg { margin: 0 33px 0 10px; }
.status .t25 { width: 24px; }
.cr { margin: 0 9px 0 0; }
.views { display: flex; gap: 3px; padding: 0 10px; }
.pct { width: 55px; margin: 0 5px 0 0; gap: 4px; }
.zoom { appearance: none; width: 143px; height: 14px; margin: 0 6px 0 10px; background: linear-gradient(90deg, #4a5068 50%, #c6cad2 50%) no-repeat center / 100% 1px; }
.zoom::-webkit-slider-thumb { appearance: none; width: 12px; height: 12px; border: 1px solid #4a5068; border-radius: 50%; background: #fff; }
.fs { margin-left: 8px; }

.meter { position: fixed; right: 0; top: 780px; width: 10px; height: 59px; padding: 7px 2px 6px 4px; background: #525664; border: 1px solid #3a3d4a; border-right: 0; border-radius: 4px 0 0 4px; display: flex; flex-direction: column; }
.idle { height: 14px; background: repeating-linear-gradient(#2e313c 0 1px, transparent 1px 2px); }
.live { flex: 1; background: repeating-linear-gradient(transparent 0 1px, #525664 1px 2px), linear-gradient(#e8c65a, #a8d878, #5fd6c4); }
.ime { position: fixed; right: 39px; top: 910px; display: flex; align-items: center; gap: 8px; height: 26px; padding-right: 3px; background: #fff; border: 1px solid #a9c3e6; }
.ime svg { width: 16px; height: 16px; stroke: none; }
.ime .imelogo { width: 32px; height: 30px; margin: -5px -4px 0 0; }
.zh { width: 16px; font-size: 16px; font-weight: bold; color: #0a6fd6; }
.mark { position: fixed; right: 11px; top: 989px; display: flex; opacity: .85; pointer-events: none; }
.mark svg { width: 44px; height: 42px; stroke: none; }
.mark b { display: block; font-size: 21px; line-height: 26px; color: #5a9bd8; }
.mark em { display: block; font: bold 16px/18px "Liberation Sans", sans-serif; color: #5cc070; }
```
FILE: sheet.js
```js
const COLS = "ABCDEFGHIJKLMNOPQRSTUV".split("");
const ROWS = 44;
const DATA = [
  ["姓名", "部门", "销量", "整数"],
  ["李依依", "销售一部", "23.98", "23"],
  ["赵晓慧", "销售一部", "42.5"],
  ["秦天", "销售一部", "53.64"],
  ["欧阳花", "销售一部", "25.24"],
  ["杨洋", "销售一部", "42.53"],
  ["杨小小", "销售二部", "35.25"],
  ["周先", "销售二部", "42.25"],
  ["周慧", "销售二部", "46.12"],
  ["李白", "销售三部", "56.34"],
  ["杜甫", "销售三部", "25.53", "26"],
  ["张三", "销售三部", "35.13", "35"],
  ["合计"]
];

function cell(r, c) {
  const text = (DATA[r] && DATA[r][c]) || "";
  if (r === 0 && c < 3) {
    return `<td><div class="headcell">${text}<button class="filter" aria-label="筛选${text}"><i></i></button></div></td>`;
  }
  const cls = [];
  if (r > 0 && c > 1) cls.push("n");
  const picked = r === 11 && c === 3;
  if (picked) cls.push("pick");
  return `<td class="${cls.join(" ")}">${text}${picked ? '<i class="frame"></i>' : ""}</td>`;
}

let html = '<colgroup><col style="width:34px">' + '<col style="width:72px">'.repeat(COLS.length) + "</colgroup>";
html += '<thead><tr><th class="all"></th>' + COLS.map((n, c) => `<th${c === 3 ? ' class="cur"' : ""}>${n}</th>`).join("") + "</tr></thead><tbody>";
for (let r = 0; r < ROWS; r++) {
  html += `<tr><th${r === 11 ? ' class="cur"' : ""}>${r + 1}</th>` + COLS.map((_, c) => cell(r, c)).join("") + "</tr>";
}
document.getElementById("cells").innerHTML = html + "</tbody>";
```
